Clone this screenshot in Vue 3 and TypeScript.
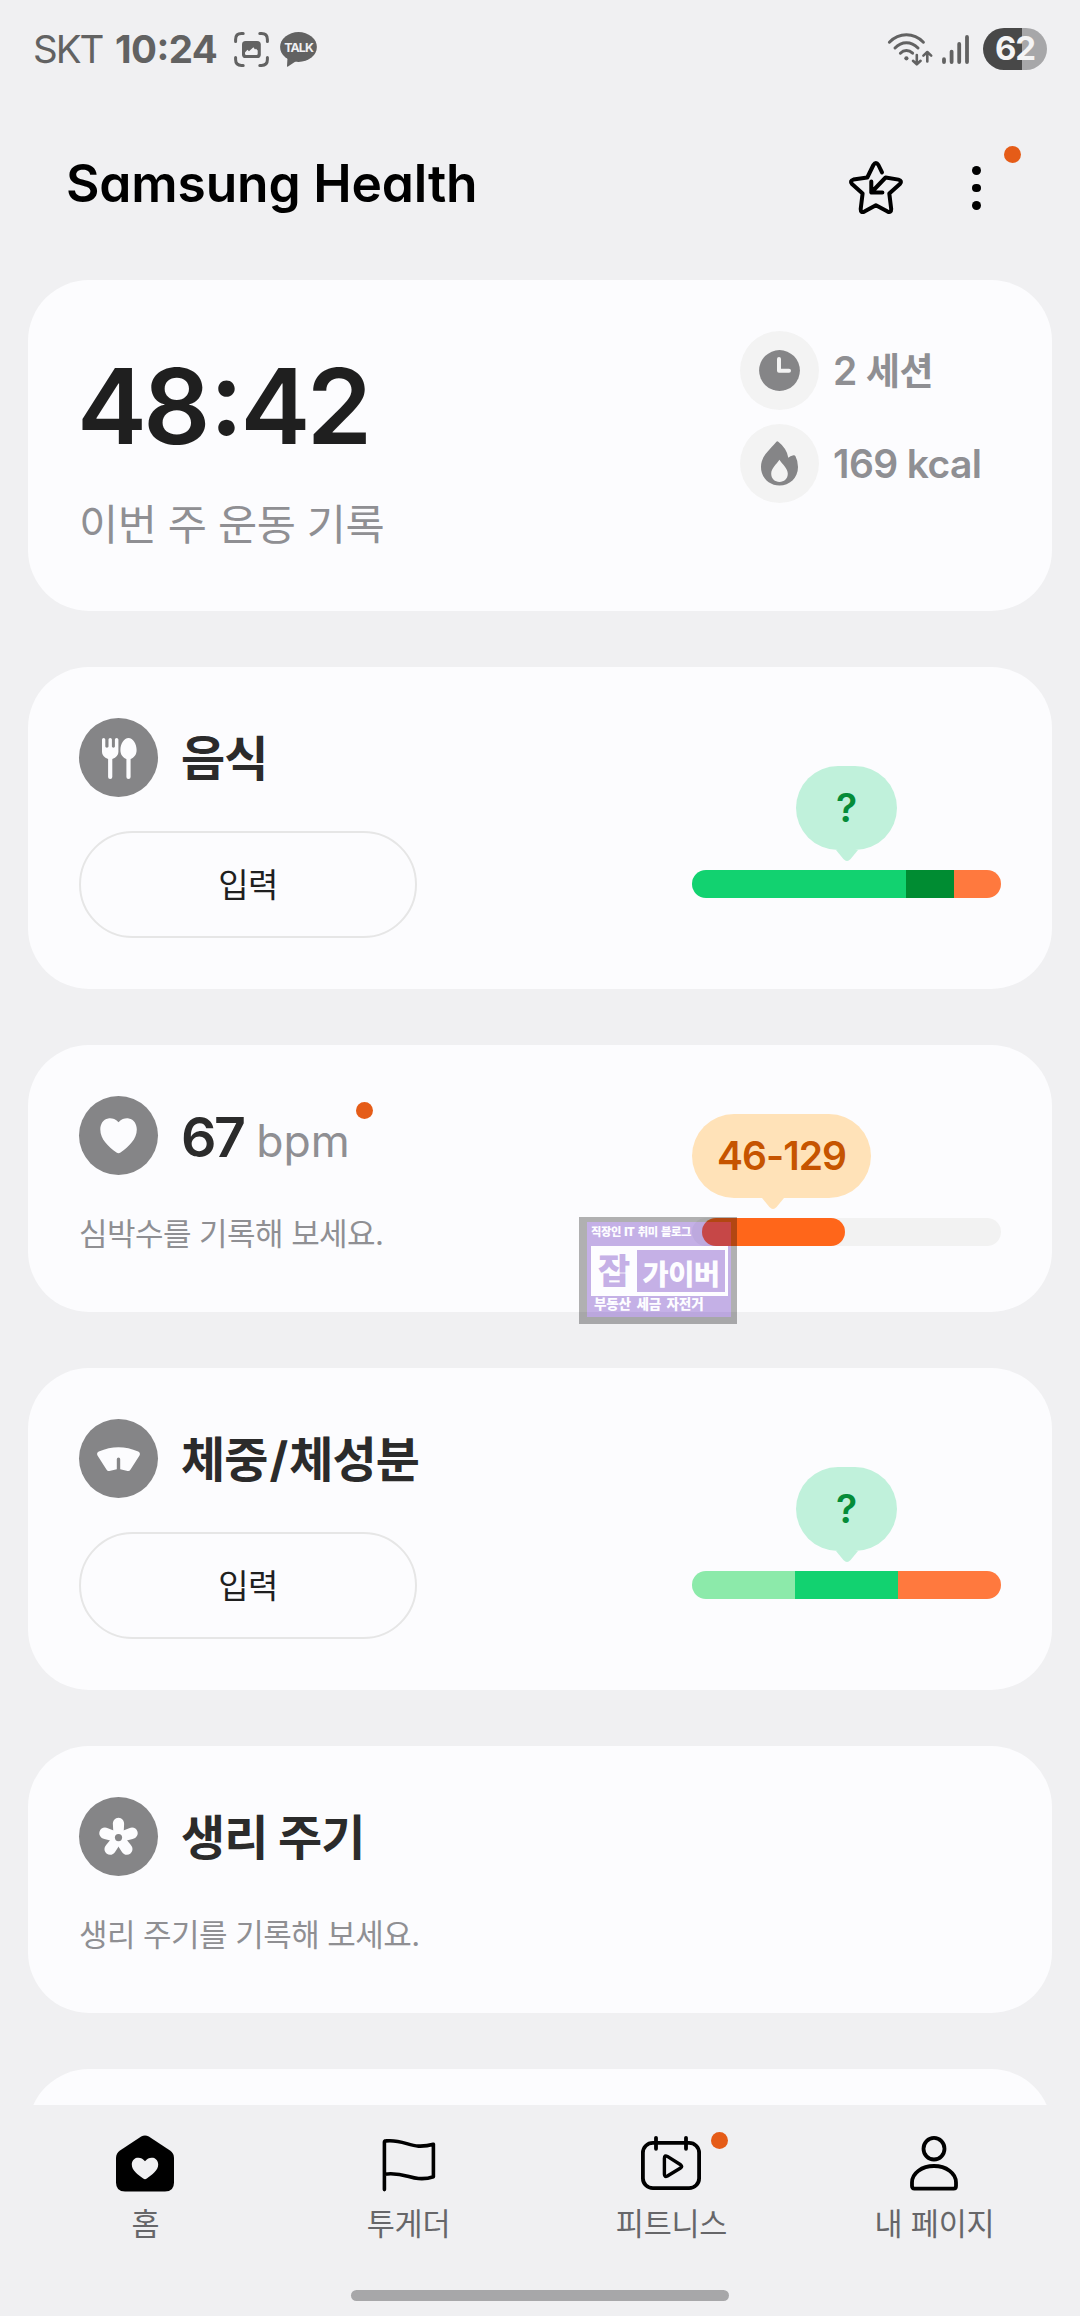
<script setup lang="ts">
interface Segment {
  width: number
  color: string
}

const foodSegments: Segment[] = [
  { width: 214, color: '#12d270' },
  { width: 47.5, color: '#008c32' },
  { width: 47.5, color: '#ff793e' },
]

const bodySegments: Segment[] = [
  { width: 103, color: '#8ceaaa' },
  { width: 103, color: '#12d270' },
  { width: 103, color: '#ff793e' },
]

const petals: number[] = [0, 72, 144, 216, 288]
</script>

<template>
  <div class="screen">
    <header class="status">
      <div class="status-left">
        <span class="carrier">SKT</span>
        <span class="clock">10<span class="colon">:</span>24</span>
        <svg class="capture" width="35" height="35" viewBox="0 0 35 35">
          <g fill="none" stroke="#626262" stroke-width="3" stroke-linecap="round">
            <path d="M1.6 9.5V7.5Q1.6 1.6 7.5 1.6H9.2M25.8 1.6H27.5Q33.4 1.6 33.4 7.5V9.5M33.4 25.5V27.5Q33.4 33.4 27.5 33.4H25.8M9.2 33.4H7.5Q1.6 33.4 1.6 27.5V25.5" />
          </g>
          <rect x="8" y="9" width="18.8" height="17" rx="3.6" fill="#626262" />
          <path d="M11 20.6L13.4 17.8L15 19.2L19.4 15.2L21 17.4L22 16.8L23.7 18.6V21.8Q23.7 23 22.5 23H12.2Q11 23 11 21.8Z" fill="#f0f0f2" />
        </svg>
        <svg class="talk" width="37" height="35" viewBox="0 0 37 35">
          <ellipse cx="18.5" cy="15" rx="18.4" ry="14.9" fill="#626262" />
          <path d="M7.6 24L7 34.2Q7.2 35 8 34.6L17 28.5Z" fill="#626262" />
          <text x="18.6" y="20" text-anchor="middle" font-size="12.4" font-weight="700" letter-spacing="-0.9" fill="#f0f0f2">TALK</text>
        </svg>
      </div>
      <div class="status-right">
        <svg width="48" height="38" viewBox="0 0 48 38" fill="none" stroke="#626262" stroke-width="3" stroke-linecap="round" stroke-linejoin="round">
          <path d="M3.4 12.2Q10.8 4.8 20.4 4.8T37.4 12.2" />
          <path d="M9 18Q14 12.8 20.4 12.8T32 18" />
          <path d="M14.4 23.2Q17 20.6 20.4 20.6T26.6 23.2" />
          <circle cx="20.4" cy="28.3" r="2.1" fill="#626262" stroke="none" />
          <path d="M30.8 25V34M27 30.8L30.8 34.4L34.6 30.8M41.3 31.5V22.6M37.4 25.6L41.3 22L45.2 25.6" stroke-width="2.6" />
        </svg>
        <svg width="28" height="30" viewBox="0 0 28 30" stroke="#626262" stroke-width="3.8" stroke-linecap="round">
          <path d="M2 25.2V28M9.6 17.6V28M17.2 10V28M25 3V28" />
        </svg>
        <div class="battery">62</div>
      </div>
    </header>

    <div class="app-bar">
      <h1>Samsung Health</h1>
      <div class="actions">
        <svg width="54" height="54" viewBox="0 0 54 54" fill="none" stroke="#000" stroke-width="4" stroke-linecap="round" stroke-linejoin="round">
          <path d="M33 11.4L29.4 4Q26.9 -.1 24.4 4L18.3 16.5L4.4 18.6Q.4 19.7 3 23L13.6 32.6L11.7 48Q11.6 52.2 15.4 50.6L26.9 44.2L38.6 50.6Q42.2 52.2 42.2 48L40.3 32.6L50.9 23Q53.6 19.7 49.5 18.6L36.6 16.5L22.3 31.5M22.3 20.6V31.5H33.4" />
        </svg>
        <div class="more">
          <i></i><i></i><i></i>
          <b class="badge"></b>
        </div>
      </div>
    </div>

    <main class="cards">
      <section class="card summary">
        <div>
          <div class="duration">48<span class="colon">:</span>42</div>
          <div class="caption">이번 주 운동 기록</div>
        </div>
        <div class="stats">
          <div class="stat">
            <svg width="79" height="79" viewBox="0 0 79 79">
              <circle cx="39.5" cy="39.5" r="39.5" fill="#f3f3f3" />
              <circle cx="39.5" cy="39.5" r="20.4" fill="#858587" />
              <path d="M39 28V39.7H49" fill="none" stroke="#f3f3f3" stroke-width="4" stroke-linecap="round" stroke-linejoin="round" />
            </svg>
            <span>2 <em>세션</em></span>
          </div>
          <div class="stat">
            <svg width="79" height="79" viewBox="0 0 79 79">
              <circle cx="39.5" cy="39.5" r="39.5" fill="#f3f3f3" />
              <path d="M36.4 17.8Q37.3 16.8 38.3 17.7Q47 24.5 48.3 33.8Q50 31.8 53.5 31.2Q55 31 55.6 32.4Q58 37 58 43C58 54 49.5 61.5 39.5 61.5S21 54 21 43C21 33 27 28.5 36.4 17.8Z" fill="#858587" />
              <path d="M39.4 35.8C42.5 40.5 47.8 44.5 47.8 49.8C47.8 54.8 44 58 39.5 58S31.2 54.8 31.2 49.8C31.2 44.5 36.3 40.5 39.4 35.8Z" fill="#f3f3f3" />
            </svg>
            <span>169 kcal</span>
          </div>
        </div>
      </section>

      <section class="card tall">
        <div class="info">
          <div class="heading">
            <svg width="79" height="79" viewBox="0 0 79 79">
              <circle cx="39.5" cy="39.5" r="39.5" fill="#858587" />
              <path d="M23 21.6Q23 20 24.6 20T26.3 21.6V28.6Q26.3 29.7 27.9 29.7T29.5 28.6V21.6Q29.5 20 31.2 20T32.9 21.6V28.6Q32.9 29.7 34.4 29.7T35.9 28.6V21.6Q35.9 20 37.6 20T39.4 21.6V34Q39.4 38.6 33.3 41V59Q33.3 61 31.2 61T29.1 59V41Q23 38.6 23 34Z" fill="#fcfcfe" />
              <path d="M49.5 20C54 20 57.6 26 57.6 32C57.6 37 55 39.6 51.6 41V59Q51.6 61 49.5 61T47.4 59V41C44 39.6 41.4 37 41.4 32C41.4 26 45 20 49.5 20Z" fill="#fcfcfe" />
            </svg>
            <h2>음식</h2>
          </div>
          <button type="button">입력</button>
        </div>
        <div class="gauge">
          <div class="bubble green">?</div>
          <svg class="tail" width="22" height="11" viewBox="0 0 22 11"><path d="M0 0H22L14.6 9Q11 12.8 7.4 9Z" fill="#c0f1db" /></svg>
          <div class="bar">
            <span v-for="(s, i) in foodSegments" :key="i" :style="{ width: s.width + 'px', background: s.color }"></span>
          </div>
        </div>
      </section>

      <section class="card short">
        <div class="info">
          <div class="heading">
            <svg width="79" height="79" viewBox="0 0 79 79">
              <circle cx="39.5" cy="39.5" r="39.5" fill="#858587" />
              <path d="M39.5 26.3C43 22.4 47 21.9 49.8 22.4C55 23.3 57.8 28 57.8 33.5C57.8 43 50 50.5 41.5 56.6Q39.5 58 37.5 56.6C29 50.5 21.3 43 21.3 33.5C21.3 28 24 23.3 29.2 22.4C32 21.9 36 22.4 39.5 26.3Z" fill="#fcfcfe" />
            </svg>
            <div class="reading"><strong>67</strong><small>bpm</small><b class="badge"></b></div>
          </div>
          <p>심박수를 기록해 보세요.</p>
        </div>
        <div class="gauge">
          <div class="bubble amber">46-129</div>
          <svg class="tail tail-left" width="22" height="11" viewBox="0 0 22 11"><path d="M0 0H22L14.6 9Q11 12.8 7.4 9Z" fill="#ffe2b8" /></svg>
          <div class="bar track"><span class="range"></span></div>
        </div>
      </section>

      <section class="card tall">
        <div class="info">
          <div class="heading">
            <svg width="79" height="79" viewBox="0 0 79 79">
              <circle cx="39.5" cy="39.5" r="39.5" fill="#858587" />
              <path d="M19.8 32.6Q39.5 24 59.2 32.6Q61.8 34.2 60.5 36.4L51.4 50.8Q50.4 52.4 48.6 51.9L41.2 50.2V40.2Q41.2 38.6 39.5 38.6T37.8 40.2V50.2L30.4 51.9Q28.6 52.4 27.6 50.8L18.5 36.4Q17.2 34.2 19.8 32.6Z" fill="#fcfcfe" />
            </svg>
            <h2>체중<span class="slash">/</span>체성분</h2>
          </div>
          <button type="button">입력</button>
        </div>
        <div class="gauge">
          <div class="bubble green">?</div>
          <svg class="tail" width="22" height="11" viewBox="0 0 22 11"><path d="M0 0H22L14.6 9Q11 12.8 7.4 9Z" fill="#c0f1db" /></svg>
          <div class="bar">
            <span v-for="(s, i) in bodySegments" :key="i" :style="{ width: s.width + 'px', background: s.color }"></span>
          </div>
        </div>
      </section>

      <section class="card short">
        <div class="info">
          <div class="heading">
            <svg width="79" height="79" viewBox="0 0 79 79">
              <circle cx="39.5" cy="39.5" r="39.5" fill="#858587" />
              <g transform="translate(39.5 40.6)" fill="#fcfcfe">
                <path v-for="a in petals" :key="a" :transform="`rotate(${a})`" d="M-5 -2L-5.6 -13C-6 -17 -3.4 -19.9 0 -19.9S6 -17 5.6 -13L5 -2L0 3Z" />
              </g>
              <circle cx="39.5" cy="40.6" r="3.6" fill="#858587" />
            </svg>
            <h2>생리 주기</h2>
          </div>
          <p>생리 주기를 기록해 보세요.</p>
        </div>
      </section>

      <section class="card short"></section>
    </main>

    <nav>
      <div class="tabs">
        <div class="tab">
          <svg width="58" height="58" viewBox="0 0 58 58">
            <path d="M25.2 1.6Q29 -.6 32.8 1.6L54 15.6Q58 18.4 58 23V47.5Q58 56.6 49 56.6H9Q0 56.6 0 47.5V23Q0 18.4 4 15.6Z" fill="#000" />
            <path d="M29 26.2C31.4 23.2 34.4 22.2 37 22.8C40.4 23.5 42.2 26.6 42.2 29.6C42.2 35.6 36 39.8 30.8 43.6Q29 44.8 27.2 43.6C22 39.8 15.8 35.6 15.8 29.6C15.8 26.6 17.6 23.5 21 22.8C23.6 22.2 26.6 23.2 29 26.2Z" fill="#f0f0f2" />
          </svg>
          <span>홈</span>
        </div>
        <div class="tab">
          <svg width="58" height="58" viewBox="-3.4 -4 58 58" fill="none" stroke="#000" stroke-width="3.6" stroke-linecap="round" stroke-linejoin="round">
            <path d="M2 50.6V3.4Q2 2 3.5 1.9C18 .2 26 6.8 36 7.1Q44 7.4 51 5.3V37.7Q44 40.2 36 39.5C26 38.4 18 33 2 35.2" />
          </svg>
          <span>투게더</span>
        </div>
        <div class="tab">
          <svg width="60" height="58" viewBox="0 -1 60 58" fill="none" stroke="#000" stroke-width="3.8" stroke-linecap="round" stroke-linejoin="round">
            <rect x="1.9" y="6.8" width="56.2" height="45.4" rx="10" />
            <path d="M15 1.8V12.8M45 1.8V12.8" />
            <path d="M23.4 22.2Q23.4 18.8 26.4 20.4L39.6 28.8Q41.8 30.4 39.6 32L26.4 40Q23.4 41.6 23.4 38.2Z" stroke-width="3.4" />
          </svg>
          <span>피트니스</span>
          <b class="badge"></b>
        </div>
        <div class="tab">
          <svg width="50" height="58" viewBox="0 -1 50 58" fill="none" stroke="#000" stroke-width="3.8" stroke-linejoin="round">
            <ellipse cx="25" cy="12.7" rx="10.5" ry="10.8" />
            <path d="M5.4 52.6Q3 52.6 3 50V46.5C3 37 13 30 25 30S47 37 47 46.5V50Q47 52.6 44.6 52.6Z" />
          </svg>
          <span>내 페이지</span>
        </div>
      </div>
      <div class="home-indicator"></div>
    </nav>

    <aside class="stamp">
      <div class="stamp-face">
        <div class="stamp-top">직장인 IT 취미 블로그</div>
        <div class="stamp-name"><span>잡</span><span>가이버</span></div>
        <div class="stamp-bottom">부동산 세금 자전거</div>
      </div>
    </aside>
  </div>
</template>

<style>
body {
  background: #f0f0f2;
}
</style>

<style scoped>
.screen {
  position: relative;
  display: flex;
  flex-direction: column;
  width: 1080px;
  height: 2316px;
  overflow: hidden;
  background: #f0f0f2;
  font-family: Inter, "Noto Sans CJK KR", sans-serif;
  color: #1f1f1f;
}
.screen * {
  box-sizing: border-box;
}
svg {
  display: block;
  flex: none;
  overflow: visible;
}
h1,
h2,
p {
  margin: 0;
  white-space: nowrap;
}
.colon {
  line-height: 1;
  vertical-align: 0.09em;
}

.status {
  display: flex;
  flex: none;
  justify-content: space-between;
  align-items: center;
  height: 98px;
  padding: 0 33px 0 33px;
  color: #626262;
  line-height: 48px;
}
.status-left,
.status-right {
  display: flex;
  align-items: center;
}
.carrier {
  width: 82px;
  font-size: 38.5px;
  letter-spacing: -2px;
}
.clock {
  width: 119px;
  font-size: 38.5px;
  font-weight: 700;
  letter-spacing: -0.6px;
  font-feature-settings: "calt" 0;
}
.talk {
  margin-left: 11px;
}
.status-right svg + svg {
  margin-left: 8px;
}
.battery {
  width: 64px;
  height: 42px;
  margin-left: 13px;
  border-radius: 21px;
  background: linear-gradient(90deg, #484848 39.5px, #a7a7a9 39.5px);
  color: #f4f4f5;
  font-size: 33px;
  font-weight: 700;
  line-height: 40px;
  letter-spacing: -1px;
  text-align: center;
}

.app-bar {
  display: flex;
  flex: none;
  justify-content: space-between;
  align-items: center;
  height: 182px;
  padding: 0 99px 2px 66px;
}
h1 {
  padding-bottom: 10px;
  color: #000;
  font-size: 51.5px;
  font-weight: 600;
  line-height: 70px;
  letter-spacing: -0.15px;
  font-feature-settings: "cv11";
}
.actions {
  display: flex;
  align-items: center;
  gap: 69px;
}
.more {
  position: relative;
  display: flex;
  flex-direction: column;
  gap: 9px;
  width: 9px;
}
.more i {
  height: 8.8px;
  border-radius: 50%;
  background: #000;
}
.badge {
  position: absolute;
  width: 17px;
  height: 17px;
  border-radius: 50%;
  background: #e55c18;
}
.more .badge {
  left: 32px;
  top: -20px;
}

.cards {
  display: flex;
  flex-direction: column;
  gap: 56px;
  height: 1825px;
  padding: 0 28px;
  overflow: hidden;
}
.card {
  display: flex;
  flex: none;
  justify-content: space-between;
  height: 267px;
  padding: 51px;
  border-radius: 61px;
  background: #fcfcfe;
}
.card.tall {
  height: 322px;
}
.card.summary {
  height: 331px;
}
.duration {
  margin: 12px 0 0 -2px;
  font-size: 105px;
  font-weight: 600;
  line-height: 126px;
  letter-spacing: -3.7px;
  font-feature-settings: "calt" 0;
}
.duration .colon {
  margin: 0 1px 0 3px;
}
.caption {
  margin-top: 26px;
  color: #8f8f93;
  font-size: 42.6px;
  line-height: 60px;
  letter-spacing: -0.5px;
}
.stats {
  display: flex;
  flex-direction: column;
  gap: 14px;
  width: 261px;
}
.stat {
  display: flex;
  align-items: center;
  gap: 14px;
  color: #8f8f93;
  font-size: 39px;
  font-weight: 600;
  line-height: 60px;
  letter-spacing: -0.6px;
  white-space: nowrap;
}
.stat span {
  padding-top: 1px;
}
.stat em {
  font-size: 37px;
  font-style: normal;
}

.info {
  width: 400px;
}
.heading {
  display: flex;
  align-items: center;
  gap: 23px;
  height: 79px;
}
h2 {
  padding-top: 2px;
  color: #2b2b2b;
  font-size: 48px;
  font-weight: 700;
  line-height: 70px;
  letter-spacing: -0.9px;
}
.slash {
  margin: 0 2px;
}
button {
  display: block;
  width: 338px;
  height: 107px;
  margin-top: 34px;
  padding: 0;
  border: 2px solid #e6e6e6;
  border-radius: 54px;
  background: transparent;
  color: #1f1f1f;
  font-family: inherit;
  font-size: 33px;
  font-weight: 400;
  line-height: 50px;
  letter-spacing: -0.7px;
}
p {
  margin-top: 37px;
  color: #8f8f93;
  font-size: 31px;
  line-height: 44px;
  letter-spacing: -0.55px;
}
.reading {
  position: relative;
  padding-top: 16px;
  line-height: 70px;
  white-space: nowrap;
}
.reading strong {
  color: #2b2b2b;
  font-size: 55.5px;
  font-weight: 600;
  letter-spacing: -2.6px;
}
.reading small {
  margin-left: 13px;
  color: #8f8f93;
  font-size: 44.5px;
  letter-spacing: 0;
}
.reading .badge {
  left: 175px;
  top: 16px;
}

.gauge {
  display: flex;
  flex-direction: column;
  align-items: center;
  width: 309px;
  padding-top: 18px;
}
.tall .gauge {
  padding-top: 48px;
}
.bubble {
  width: 101px;
  height: 84px;
  border-radius: 42px;
  font-size: 39px;
  font-weight: 600;
  line-height: 84px;
  text-align: center;
}
.green {
  background: #c0f1db;
  color: #058c38;
}
.amber {
  align-self: flex-start;
  width: 179px;
  background: #ffe2b8;
  color: #c65400;
  letter-spacing: -1px;
}
.tail-left {
  align-self: flex-start;
  margin-left: 70px;
}
.bar {
  display: flex;
  width: 309px;
  height: 28px;
  margin-top: 9px;
  border-radius: 14px;
  overflow: hidden;
}
.track {
  padding-left: 10px;
  background: #f2f2f2;
}
.range {
  width: 143px;
  border-radius: 14px;
  background: #ff661a;
}

nav {
  display: flex;
  flex: none;
  flex-direction: column;
  align-items: center;
  height: 211px;
  padding-top: 30px;
}
.tabs {
  display: flex;
  width: 1052px;
}
.tab {
  position: relative;
  display: flex;
  flex: 1;
  flex-direction: column;
  align-items: center;
  color: #666669;
  font-size: 30.5px;
  line-height: 44px;
}
.tab svg {
  margin-right: 1px;
}
.tab span {
  margin-top: 9px;
  letter-spacing: -0.2px;
}
.tab .badge {
  left: 171px;
  top: -3px;
}
.home-indicator {
  width: 378px;
  height: 11px;
  margin-top: 44px;
  border-radius: 6px;
  background: #a7a7a9;
}

.stamp {
  position: absolute;
  left: 579px;
  top: 1217px;
  width: 158px;
  height: 107px;
  border: solid rgba(0, 0, 0, 0.3);
  border-width: 5px 6px 7px 8px;
  color: #fdfdff;
  font-weight: 900;
  white-space: nowrap;
}
.stamp-face {
  width: 144px;
  height: 95px;
  padding: 0 4px;
  background: rgba(67, 0, 174, 0.3);
}
.stamp-top {
  height: 24px;
  font-size: 11.3px;
  line-height: 21px;
  letter-spacing: -0.4px;
  word-spacing: 1.4px;
}
.stamp-name {
  display: flex;
  align-items: center;
  justify-content: space-between;
  width: 137px;
  height: 50px;
  padding: 0 3px 0 7px;
  background: #fdfdff;
  color: #c5b0e6;
  font-size: 35px;
  line-height: 42px;
}
.stamp-name span + span {
  width: 88px;
  height: 42px;
  background: #c5b0e6;
  color: #fdfdff;
  font-size: 28.5px;
  line-height: 49px;
  letter-spacing: -0.5px;
  text-align: center;
}
.stamp-bottom {
  padding-left: 3px;
  font-size: 13.6px;
  line-height: 17px;
  letter-spacing: -0.2px;
  word-spacing: 3px;
}
</style>
